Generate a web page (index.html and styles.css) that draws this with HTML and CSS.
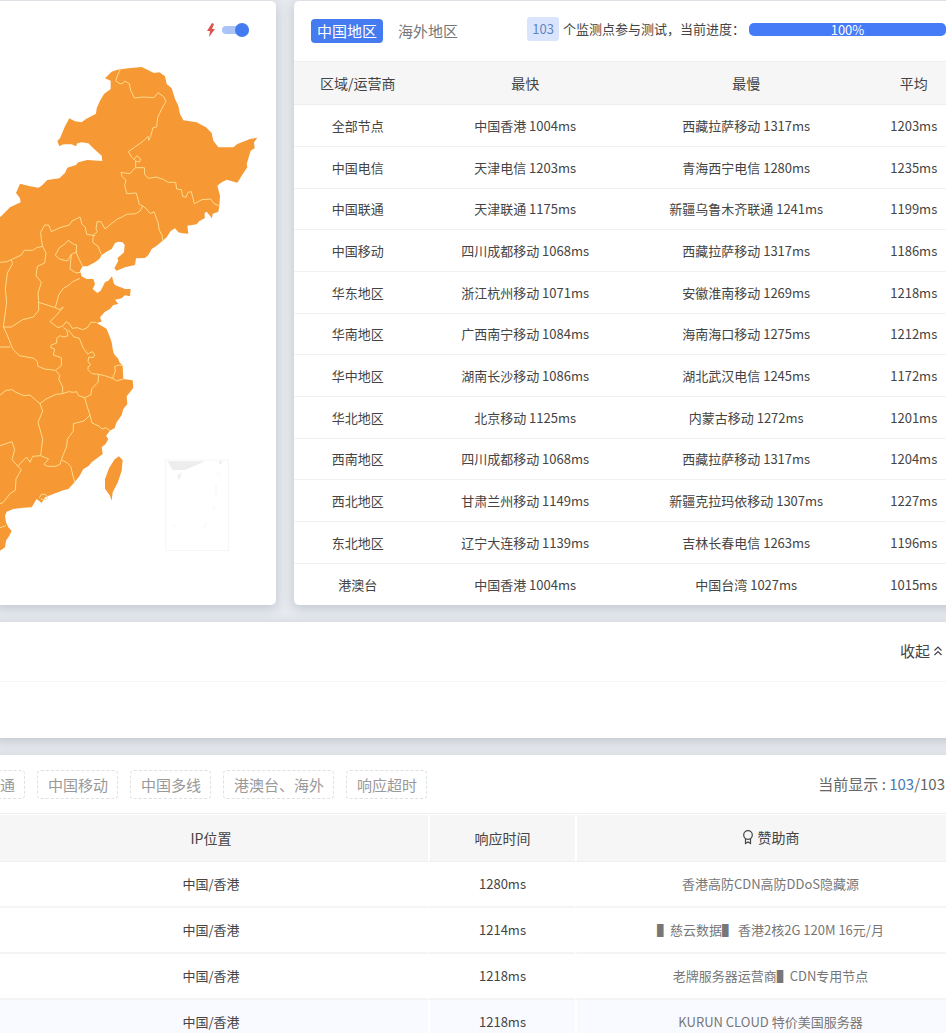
FILE: index.html
```html
<!DOCTYPE html>
<html lang="zh-CN">
<head>
<meta charset="utf-8">
<meta name="viewport" content="width=device-width, initial-scale=1">
<title>网站测速</title>
<link rel="stylesheet" href="styles.css">
</head>
<body>
<main class="page">
  <div class="overview">
    <section class="card map-card">
      <label class="map-switch">
        <svg class="bolt" viewBox="0 0 10 14" aria-hidden="true"><path d="M6 0 1 8h3L3 14l6-8H6l2-5z"/></svg>
        <input class="switch" type="checkbox" aria-label="快速模式" checked>
      </label>
      <svg class="map" viewBox="0 0 828 1500" aria-label="中国地图">
        <path class="land" d="M-5 478 5 470 30 445 62 430 60 418 48 402 60 374 90 382 115 386 125 380 142 363 178 358 195 342 202 326 228 318 235 310 262 303 307 306 305 290 280 268 265 253 245 250 232 253 228 262 215 256 190 256 178 262 172 246 180 238 195 202 208 178 225 187 245 190 258 180 288 164 290 148 300 125 312 105 332 90 332 65 315 58 335 38 352 32 385 28 425 24 462 42 478 40 495 52 500 75 515 88 525 120 535 140 540 165 550 184 590 190 605 198 618 205 635 222 640 245 655 265 700 265 712 255 750 240 772 236 762 250 764 268 752 275 740 315 742 325 725 350 712 371 680 362 665 370 652 380 660 410 658 440 655 458 638 464 636 478 620 458 614 462 614 478 598 486 590 496 562 500 565 524 548 523 535 520 525 508 512 516 500 535 488 545 470 560 455 570 445 588 435 597 408 598 405 618 375 625 350 635 343 628 355 605 352 598 372 580 374 558 368 550 355 548 345 552 335 570 320 578 305 588 298 600 285 610 262 622 248 622 240 635 245 652 260 660 280 660 285 675 278 690 292 702 302 695 315 670 325 665 336 652 342 675 350 680 362 685 375 690 392 690 390 712 375 709 365 718 345 722 355 735 340 738 330 750 315 758 300 775 305 788 290 792 307 802 320 810 328 830 335 850 338 870 342 885 355 900 358 909 368 920 370 960 398 964 400 986 395 993 380 1012 382 1035 370 1050 365 1068 350 1090 344 1107 330 1115 318 1130 325 1140 317 1155 305 1165 308 1185 292 1197 275 1210 265 1222 250 1230 238 1252 225 1268 205 1290 190 1294 160 1305 135 1315 125 1332 110 1320 95 1345 70 1346 40 1350 20 1358 15 1370 18 1390 25 1405 35 1415 28 1430 18 1445 15 1465 0 1475-5 1475Z"/>
        <path class="land" d="M357 1192 368 1204 365 1235 353 1271 338 1300 335 1325 330 1310 315 1289 315 1261 327 1228 344 1201Z"/>
        <g class="borders">
          <path d="M360 33 352 50 347 66 360 74 368 74 374 66 388 74 392 94 403 117 430 114 462 116 474 101 490 112 498 127 484 152 473 176 470 204 459 206 452 232 446 244 444 232 430 246 385 278 396 295 407 306 407 326 433 326 434 346 445 358 468 354 490 361 505 370 527 370 530 390 544 392 548 412 558 415 564 400 574 398 583 434 606 422 632 420 642 434 657 440M402 302 411 290 422 300 418 309 407 306"/>
          <path d="M407 326 398 334 390 344 375 342 363 340 366 352 378 364 374 378 380 404 409 402 418 436 428 441 440 450 451 464 462 458 474 490 478 514 486 528 488 545M428 441 420 456 407 464 380 466 366 474 352 480 332 496 315 510 303 488 291 488 288 510 292 518 280 528 278 550 294 562 304 586"/>
          <path d="M0 610 20 608 34 602 64 588 72 574 98 574 110 566 128 562 124 542 122 520 134 498 146 498 154 518 180 506 208 498 216 486 240 474 246 496 256 504 260 526 286 530"/>
          <path d="M128 562 138 582 134 612 112 622 108 650 124 670 114 702 116 730 166 746M34 602 38 614 22 642 16 690 20 730 10 804 34 804 68 782 100 774 116 754 116 730"/>
          <path d="M166 588 178 566 194 556 204 544 218 554 230 558 228 580 238 602 248 622M166 588 178 600 202 606 214 586 232 578M214 586 210 630 228 642 240 640M240 658 218 668 210 676 190 688 176 708 166 746 178 752 190 744 168 770 150 788 174 806 190 800 198 788 210 796 216 808 232 806 248 812 262 806 272 790 290 790"/>
          <path d="M10 804 18 820 28 844 38 870 58 890 102 898 112 908 114 922 134 930 166 934 184 920 184 896 160 888 164 870 152 866 154 858 170 852 170 838 180 830 192 834 204 830 200 812 190 806M0 864 30 864"/>
          <path d="M204 812 222 834 238 838 250 868 264 886 268 882 278 878 284 888 280 896 266 894 264 908 272 918 264 924 264 932 276 944 296 946 314 950 338 958 346 936 344 922 358 918 368 920M338 958 350 966 370 960"/>
          <path d="M166 934 180 950 176 960 188 984 188 1004 168 1006 138 1020 120 1034 108 1024 90 1008 72 1010 48 1000 36 992 18 994 0 1008M188 1004 206 998 220 1000 230 998 236 1010 254 1016 272 1008 276 988 294 970 296 946"/>
          <path d="M120 1034 128 1056 114 1090 128 1140 122 1190 98 1192 90 1210 80 1194 64 1210 54 1222 36 1202 44 1172 36 1148 0 1160M54 1222 64 1232 48 1260 46 1294 30 1304 10 1330 0 1334"/>
          <path d="M122 1190 146 1200 132 1216 142 1222 166 1222 180 1216 184 1202 200 1162 202 1140 210 1130 220 1116 220 1094 252 1086 270 1068 262 1044 254 1016M270 1068 276 1092 298 1102 306 1110 318 1106 330 1115M184 1202 202 1212 212 1222 224 1270M118 1316 124 1306 136 1306 144 1314 138 1322 122 1320M0 1406 18 1400"/>
        </g>
        <g class="inset">
          <rect x="497" y="1203" width="188" height="272"/>
          <path d="M503 1207H615L555 1233H518ZM532 1250 545 1240 537 1264ZM656 1205 668 1209 660 1218Z"/>
          <path class="sea-line" d="M648 1275V1310M644 1340 638 1352M618 1392 611 1405M522 1395V1404M652 1240 660 1250"/>
        </g>
      </svg>
    </section>

    <section class="card stats-card">
      <header class="stats-head">
        <div class="tabs">
          <button class="tab active" type="button">中国地区</button>
          <button class="tab" type="button">海外地区</button>
        </div>
        <div class="progress-area">
          <span class="badge">103</span>
          <span class="progress-text">个监测点参与测试，当前进度：</span>
          <div class="progress" role="progressbar" aria-label="当前进度" aria-valuenow="100" aria-valuemin="0" aria-valuemax="100">100%</div>
        </div>
      </header>
      <table class="stats">
        <colgroup><col class="c-area"><col class="c-fast"><col class="c-slow"><col class="c-avg"></colgroup>
        <thead><tr><th>区域/运营商</th><th>最快</th><th>最慢</th><th>平均</th></tr></thead>
        <tbody>
          <tr><td>全部节点</td><td>中国香港 1004ms</td><td>西藏拉萨移动 1317ms</td><td>1203ms</td></tr>
          <tr><td>中国电信</td><td>天津电信 1203ms</td><td>青海西宁电信 1280ms</td><td>1235ms</td></tr>
          <tr><td>中国联通</td><td>天津联通 1175ms</td><td>新疆乌鲁木齐联通 1241ms</td><td>1199ms</td></tr>
          <tr><td>中国移动</td><td>四川成都移动 1068ms</td><td>西藏拉萨移动 1317ms</td><td>1186ms</td></tr>
          <tr><td>华东地区</td><td>浙江杭州移动 1071ms</td><td>安徽淮南移动 1269ms</td><td>1218ms</td></tr>
          <tr><td>华南地区</td><td>广西南宁移动 1084ms</td><td>海南海口移动 1275ms</td><td>1212ms</td></tr>
          <tr><td>华中地区</td><td>湖南长沙移动 1086ms</td><td>湖北武汉电信 1245ms</td><td>1172ms</td></tr>
          <tr><td>华北地区</td><td>北京移动 1125ms</td><td>内蒙古移动 1272ms</td><td>1201ms</td></tr>
          <tr><td>西南地区</td><td>四川成都移动 1068ms</td><td>西藏拉萨移动 1317ms</td><td>1204ms</td></tr>
          <tr><td>西北地区</td><td>甘肃兰州移动 1149ms</td><td>新疆克拉玛依移动 1307ms</td><td>1227ms</td></tr>
          <tr><td>东北地区</td><td>辽宁大连移动 1139ms</td><td>吉林长春电信 1263ms</td><td>1196ms</td></tr>
          <tr><td>港澳台</td><td>中国香港 1004ms</td><td>中国台湾 1027ms</td><td>1015ms</td></tr>
        </tbody>
      </table>
    </section>
  </div>

  <section class="card fold-card">
    <header class="fold-head">
      <button class="fold" type="button">收起<svg viewBox="0 0 10 12" aria-hidden="true"><path d="M1.500 5.500 5 2 8.500 5.500M1.500 10 5 6.500 8.500 10"/></svg></button>
    </header>
    <div class="fold-body"></div>
  </section>

  <section class="card list-card">
    <header class="list-head">
      <div class="chips">
        <button class="chip" type="button">中国联通</button>
        <button class="chip" type="button">中国移动</button>
        <button class="chip" type="button">中国多线</button>
        <button class="chip" type="button">港澳台、海外</button>
        <button class="chip" type="button">响应超时</button>
      </div>
      <div class="count">当前显示 : <span class="shown">103</span>/103</div>
    </header>
    <table class="list">
      <colgroup><col class="c-ip"><col class="c-time"><col class="c-sponsor"></colgroup>
      <thead>
        <tr><th>IP位置</th><th>响应时间</th><th><span class="sponsor-title"><svg viewBox="0 0 12 16" aria-hidden="true"><circle cx="6" cy="6" r="4.300"/><path d="M3.500 9.500v5l2.500-1.500 2.500 1.500v-5"/></svg>赞助商</span></th></tr>
      </thead>
      <tbody>
        <tr><td>中国/香港</td><td>1280ms</td><td><a href="#">香港高防CDN高防DDoS隐藏源</a></td></tr>
        <tr><td>中国/香港</td><td>1214ms</td><td><a href="#">▌慈云数据▌ 香港2核2G 120M 16元/月</a></td></tr>
        <tr><td>中国/香港</td><td>1218ms</td><td><a href="#">老牌服务器运营商▌CDN专用节点</a></td></tr>
        <tr class="hovered"><td>中国/香港</td><td>1218ms</td><td><a href="#">KURUN CLOUD 特价美国服务器</a></td></tr>
      </tbody>
    </table>
  </section>
</main>
</body>
</html>
```

FILE: styles.css
```css
* { box-sizing: border-box; }

body {
  margin: 0;
  height: 100vh;
  overflow: hidden;
  background: #e6e9ee;
  color: #444;
  font: 13px/20px "Noto Sans CJK SC", "Noto Sans", sans-serif;
}

button {
  margin: 0;
  padding: 0;
  border: 0;
  background: none;
  color: inherit;
  font: inherit;
  cursor: pointer;
}

.page {
  display: flex;
  flex-direction: column;
  gap: 17px;
  margin: 0 -18px 0 -6px;
  padding-top: 1px;
}

.card {
  background: #fff;
  border-radius: 5px;
  box-shadow: 0 3px 12px rgba(40, 60, 80, 0.2);
}

.overview {
  display: grid;
  grid-template-columns: minmax(0, 282fr) minmax(0, 670fr);
  gap: 18px;
}

.map-card {
  display: flex;
  flex-direction: column;
  padding-left: 6px;
}

.map-switch {
  display: flex;
  align-items: center;
  justify-content: flex-end;
  gap: 6px;
  height: 58px;
  padding-right: 27px;
}

.bolt {
  width: 10px;
  height: 14px;
  fill: #d9534f;
}

.switch {
  appearance: none;
  display: flex;
  justify-content: flex-end;
  align-items: center;
  width: 27px;
  height: 8px;
  margin: 0;
  border-radius: 4px;
  background: #aac4f8;
}

.switch::before {
  content: "";
  width: 14px;
  height: 14px;
  border-radius: 50%;
  background: #457bf0;
}

.map { display: block; width: 100%; }
.land { fill: #f69833; }
.borders { fill: none; stroke: #ffdb8c; stroke-width: 3; stroke-linejoin: round; }
.inset { fill: #ededed; }
.inset rect, .sea-line { fill: none; stroke: #f5f5f5; stroke-width: 3; }

.stats-head {
  display: flex;
  align-items: center;
  justify-content: space-between;
  height: 60px;
  padding: 0 18px 0 17px;
}

.tabs { display: flex; gap: 9px; }

.tab {
  height: 24px;
  padding: 0 6px;
  border-radius: 4px;
  color: #777;
  font-size: 15px;
  line-height: 24px;
}

.tab.active { background: #457bf0; color: #fff; }

.progress-area {
  display: flex;
  align-items: center;
  gap: 4px;
  margin-bottom: 4px;
}

.badge {
  padding: 2px 5px;
  border-radius: 3px;
  background: #dae5fd;
  color: #5f87c4;
}

.progress {
  width: 197px;
  height: 13px;
  border-radius: 5px;
  background: #457bf6;
  color: #fff;
  line-height: 13px;
  text-align: center;
}

table {
  width: 100%;
  table-layout: fixed;
  border-collapse: separate;
  border-spacing: 0;
  text-align: center;
}

th {
  padding: 0 0 1px;
  background: #f6f6f6;
  font-size: 14px;
  font-weight: 400;
}

td { padding: 0; }

.stats th {
  height: 44px;
  border-top: 1px solid #f0f0f0;
  border-bottom: 1px solid #eee;
}

.stats td { height: 42px; border-bottom: 1px solid #f0f0f0; }
.stats tr:nth-child(3n) td { height: 41px; }
.stats tr:last-child td { border-bottom: 0; }
.c-area { width: 19%; }
.c-fast { width: 31%; }
.c-slow { width: 35%; }
.c-avg { width: 15%; }

.fold-head {
  display: flex;
  align-items: center;
  justify-content: flex-end;
  height: 60px;
  padding: 0 21px 2px 0;
  border-bottom: 1px solid #f6f6f6;
}

.fold {
  display: flex;
  align-items: center;
  gap: 3px;
  font-size: 15px;
}

.fold svg {
  width: 10px;
  height: 12px;
  fill: none;
  stroke: #444;
  stroke-width: 1.2;
}

.fold-body { height: 56px; }

.list-head {
  display: flex;
  align-items: center;
  justify-content: space-between;
  height: 59px;
  padding-right: 19px;
  border-bottom: 1px solid #eee;
  font-size: 15px;
}

.chips { display: flex; gap: 12px; margin-left: -50px; }

.chip {
  height: 29px;
  padding: 0 9px 0 10px;
  border: 1px dashed #dee1e1;
  border-radius: 4px;
  color: #999;
  line-height: 27px;
}

.count { color: #666; }
.shown { color: #457bb5; }

.list { padding-top: 1px; }
.list th { height: 47px; border-bottom: 1px solid #f0f0f0; }
.list td { height: 46px; border-bottom: 2px solid #f4f4f4; }
.list th + th, .list td + td { border-left: 2px solid #fff; }
.list .hovered td { background: #f9faff; }
.list a { color: #777; text-decoration: none; }
.c-ip { width: 434px; }
.c-time { width: 147px; }

.sponsor-title {
  display: inline-flex;
  align-items: center;
  gap: 4px;
}

.sponsor-title svg {
  width: 12px;
  height: 16px;
  fill: none;
  stroke: #444;
  stroke-width: 1.2;
}
```
